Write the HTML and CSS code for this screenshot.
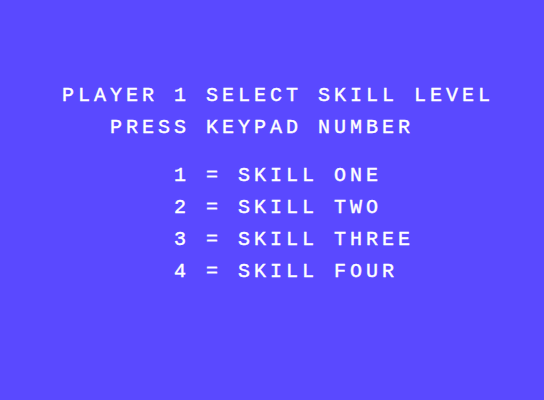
FILE: index.html
```html
<!DOCTYPE html>
<html lang="en">
<head>
    <meta charset="UTF-8">
    <meta name="viewport" content="width=device-width, initial-scale=1.0">
    <title>Skill Level</title>
    <link rel="stylesheet" href="styles.css">
</head>
<body>

    <div class="screen">
<pre class="text">
   PLAYER 1 SELECT SKILL LEVEL

      PRESS KEYPAD NUMBER


          1 = SKILL ONE

          2 = SKILL TWO

          3 = SKILL THREE

          4 = SKILL FOUR</pre>
    </div>

</body>
</html>
```

FILE: styles.css
```css
body {
    margin: 0;
    background-color: #5a49ff;
    height: 100vh;
    overflow: hidden;
}
.screen {
    width: 512px;
    height: 304px;
    padding: 88px 14px 8px;
}
/* 8x8 character cells, doubled */
.text {
    margin: 0;
    font-family: "Liberation Mono", monospace;
    font-size: 20px;
    letter-spacing: 4px;
    line-height: 16px;
    color: #fff;
    -webkit-text-stroke: 0.4px #fff;
}
```
